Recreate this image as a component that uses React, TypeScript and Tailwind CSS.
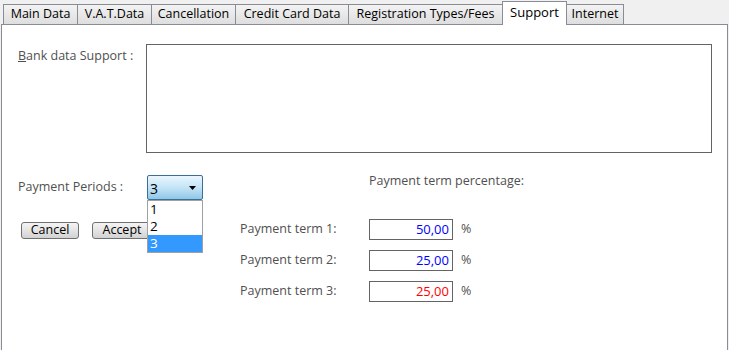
import React from "react";

const tabs = [
  { label: "Main Data", w: 74 },
  { label: "V.A.T.Data", w: 74 },
  { label: "Cancellation", w: 84 },
  { label: "Credit Card Data", w: 113 },
  { label: "Registration Types/Fees", w: 154 },
];

const terms = [
  { label: "Payment term 1:", value: "50,00", color: "text-[#0000ff]" },
  { label: "Payment term 2:", value: "25,00", color: "text-[#0000ff]" },
  { label: "Payment term 3:", value: "25,00", color: "text-[#ff0000]" },
];

function Btn({ children, w }: { children: React.ReactNode; w: string }) {
  return (
    <div
      className={`${w} h-[17px] border border-[#707070] rounded-[3px] bg-gradient-to-b from-[#f4f4f4] via-[#e4e4e4] to-[#d2d2d2] flex items-center justify-center text-black leading-none`}
    >
      {children}
    </div>
  );
}

export default function App() {
  return (
    <div
      className="w-[729px] h-[350px] bg-[#f0f0f0] overflow-hidden text-[12.5px]"
      style={{ fontFamily: '"Open Sans", "Noto Sans", sans-serif' }}
    >
      {/* Tabs */}
      <div className="flex items-end h-[24px] pl-[3px] relative z-10 font-medium text-black">
        {tabs.map((t) => (
          <div
            key={t.label}
            style={{ width: t.w }}
            className="h-[20px] bg-gradient-to-b from-[#f3f3f3] to-[#dedede] border-t border-l border-[#898c95] flex items-center justify-center"
          >
            {t.label}
          </div>
        ))}
        <div className="w-[65px] h-[24px] -mb-px bg-white border border-b-0 border-[#898c95] flex items-center justify-center text-[13px] pb-[2px]">
          Support
        </div>
        <div className="w-[57px] h-[20px] bg-gradient-to-b from-[#f3f3f3] to-[#dedede] border-t border-r border-[#898c95] flex items-center justify-center">
          Internet
        </div>
      </div>

      {/* Panel */}
      <div className="ml-[1px] w-[727px] h-[330px] bg-white border border-[#898c95] pl-[16px] text-[#505050]">
        {/* Row 1 */}
        <div className="flex mt-[19px]">
          <div className="w-[128px] pt-[4px] leading-[16px]">
            <span className="underline">B</span>ank data Support :
          </div>
          <div className="w-[566px] h-[109px] border border-[#646464] bg-white" />
        </div>

        {/* Row 2 */}
        <div className="flex items-start mt-[22px]">
          <div className="w-[129px] h-[25px] flex items-center">Payment Periods :</div>
          <div className="relative w-[56px] h-[25px]">
            <div className="w-full h-full border border-[#3c6f98] rounded-[2px] bg-gradient-to-b from-[#eaf6fd] via-[#c4e4f6] to-[#8fc7e8] flex items-center justify-between pl-[2px] pr-[6px] text-black text-[14px]">
              <span className="mt-[2px]">3</span>
              <svg width="7" height="4" viewBox="0 0 7 4">
                <path d="M0 0 H7 L3.5 4 Z" fill="#000" />
              </svg>
            </div>
            <div className="absolute left-0 top-[25px] w-[56px] border border-[#a0a0a0] bg-white z-20 text-[13.5px] leading-[17px]">
              <div className="h-[17px] pl-[2px] text-black">1</div>
              <div className="h-[17px] pl-[2px] text-black">2</div>
              <div className="h-[17px] pl-[2px] bg-[#3399ff] text-white">3</div>
            </div>
          </div>
          <div className="ml-[166px] leading-[16px] mt-[-2px]">Payment term percentage:</div>
        </div>

        {/* Row 3 */}
        <div className="flex mt-[19px]">
          <div className="w-[222px] pt-[3px] flex">
            <div className="ml-[3px]">
              <Btn w="w-[58px]">Cancel</Btn>
            </div>
            <div className="ml-[13px]">
              <Btn w="w-[60px]">Accept</Btn>
            </div>
          </div>
          <div className="flex flex-col gap-[10px]">
            {terms.map((t) => (
              <div key={t.label} className="flex items-center h-[21px]">
                <div className="w-[129px]">{t.label}</div>
                <div
                  className={`w-[84px] h-[21px] border border-[#646464] flex items-center justify-end pr-[3px] text-[13px] ${t.color}`}
                >
                  {t.value}
                </div>
                <div className="ml-[8px]">%</div>
              </div>
            ))}
          </div>
        </div>
      </div>
    </div>
  );
}
